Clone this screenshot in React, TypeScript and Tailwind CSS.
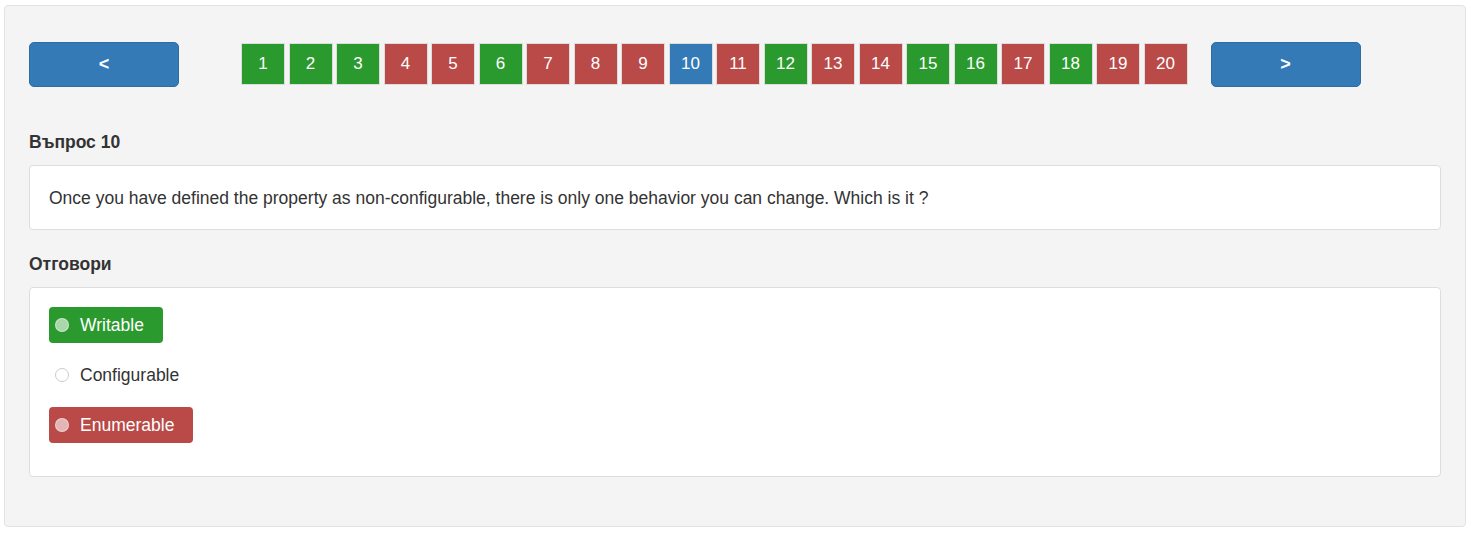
import React from "react";

type Status = "ok" | "bad" | "current";

const pages: Status[] = [
  "ok", "ok", "ok", "bad", "bad", "ok", "bad", "bad", "bad", "current",
  "bad", "ok", "bad", "bad", "ok", "ok", "bad", "ok", "bad", "bad",
];

const answers = [
  { text: "Writable", tone: "ok" },
  { text: "Configurable", tone: "none" },
  { text: "Enumerable", tone: "bad" },
];

function PageBox({ n, status }: { n: number; status: Status }) {
  const bg =
    status === "ok"
      ? "bg-[#2b9a2e]"
      : status === "bad"
      ? "bg-[#b94a48]"
      : "bg-[#337ab7]";
  return (
    <div
      className={`${bg} w-[44px] h-[42px] border border-[#dddddd] flex items-center justify-center text-white text-[17px]`}
    >
      {n}
    </div>
  );
}

function Answer({ text, tone }: { text: string; tone: string }) {
  const box =
    tone === "ok"
      ? "bg-[#2b9a2e] text-white"
      : tone === "bad"
      ? "bg-[#b94a48] text-white"
      : "text-[#333333]";
  const dot =
    tone === "none"
      ? "bg-white border border-[#cccccc]"
      : "bg-white/60 border border-white/40";
  return (
    <div className="flex mb-[14px] last:mb-0">
      <div className={`${box} h-[36px] rounded-[4px] flex items-center pl-[6px] pr-[19px]`}>
        <span className={`${dot} w-[14px] h-[14px] rounded-full`}></span>
        <span className="ml-[11px] text-[17.5px]">{text}</span>
      </div>
    </div>
  );
}

export default function App() {
  return (
    <div className="bg-white min-h-[535px] pt-[5px] pl-[4px]" style={{ fontFamily: '"Liberation Sans", Arial, sans-serif' }}>
      <div className="w-[1462px] h-[522px] bg-[#f4f4f4] border border-[#e3e3e3] rounded-[4px] px-6 pt-[36px]">
        {/* navigation row */}
        <div className="flex items-start">
          <button className="w-[150px] h-[45px] rounded-[5px] bg-[#337ab7] border border-[#2e6da4] text-white text-[18px] font-bold">
            &lt;
          </button>
          <div className="flex gap-[3.5px] ml-[62px] mt-[1px]">
            {pages.map((s, i) => (
              <PageBox key={i} n={i + 1} status={s} />
            ))}
          </div>
          <button className="ml-[23px] w-[150px] h-[45px] rounded-[5px] bg-[#337ab7] border border-[#2e6da4] text-white text-[18px] font-bold">
            &gt;
          </button>
        </div>

        <h4 className="mt-[43px] text-[17.5px] leading-[24px] font-bold text-[#333333]">Въпрос 10</h4>
        <div className="mt-[11px] bg-white border border-[#dddddd] rounded-[4px] px-[19px] pt-[20px] pb-[19px] text-[17.5px] leading-[24px] text-[#333333]">
          Once you have defined the property as non-configurable, there is only one behavior you can change. Which is it ?
        </div>

        <h4 className="mt-[22px] text-[17.5px] leading-[24px] font-bold text-[#333333]">Отговори</h4>
        <div className="mt-[11px] bg-white border border-[#dddddd] rounded-[4px] px-[19px] pt-[19px] pb-[33px]">
          {answers.map((a) => (
            <Answer key={a.text} text={a.text} tone={a.tone} />
          ))}
        </div>
      </div>
    </div>
  );
}
